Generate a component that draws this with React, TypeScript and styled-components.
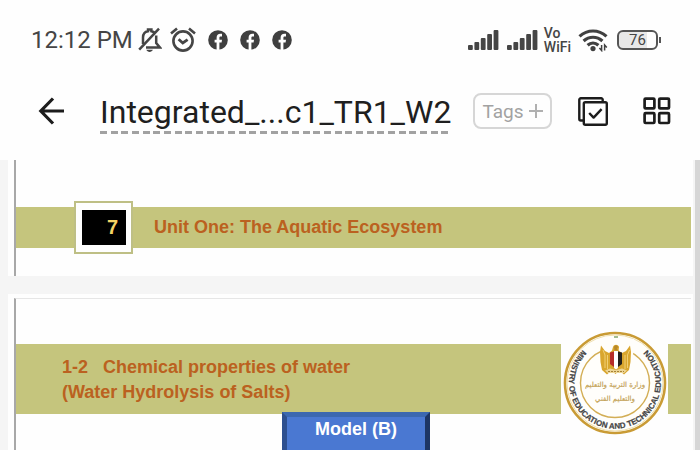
import { createGlobalStyle, styled } from 'styled-components';

const SIGNAL_BARS = [5, 8, 12, 16, 20];

const SignalIcon = () => (
  <svg width="32" height="22" viewBox="0 0 32 22" fill="#454545">
    {SIGNAL_BARS.map((height, index) => (
      <rect
        key={height}
        x={index * 6.4}
        y={21 - height}
        width="4.8"
        height={height}
        rx="1"
      />
    ))}
  </svg>
);

const BellOffIcon = () => (
  <svg
    width="24"
    height="26"
    viewBox="0 0 24 26"
    fill="none"
    stroke="#454545"
    strokeWidth="2.5"
  >
    <path d="M1.2 22.6 21 1.6" />
    <path d="M5 17v-6.4C5 6.8 7.4 4.6 10 4.2V2.4h3.4v1.8c1.2.2 2.2.7 3 1.3" />
    <path d="M18.2 8.6V16l3.8 4.6H8" />
    <path d="M8.4 22.8h6.4c-.8 2.8-5.6 2.8-6.4 0z" fill="#454545" stroke="none" />
  </svg>
);

const AlarmIcon = () => (
  <svg
    width="26"
    height="26"
    viewBox="0 0 26 26"
    fill="none"
    stroke="#454545"
    strokeWidth="2.6"
  >
    <circle cx="13" cy="14" r="9.6" />
    <path d="M1 6.4 7 1.4M25 6.4 19 1.4" />
    <path d="M8.6 12.2l4.2 3.8 4.8-3.4" strokeWidth="2.8" />
  </svg>
);

const FacebookIcon = () => (
  <svg width="20" height="20" viewBox="0 0 20 20">
    <circle cx="10" cy="10" r="9.8" fill="#3f3f3f" />
    <path
      d="M8.6 20v-7.4H6.6V9.8h2V8c0-2.8 1.5-4.2 3.8-4.2h1.6v2.6h-1.2c-1 0-1.4.5-1.4 1.4v2h2.6l-.4 2.8h-2.2V20z"
      fill="#fff"
    />
  </svg>
);

const WifiIcon = () => (
  <svg
    width="30"
    height="24"
    viewBox="0 0 30 24"
    fill="none"
    stroke="#404040"
    strokeWidth="3.2"
  >
    <path d="M1.5 8.4c8-7.2 19-7.2 27 0" />
    <path d="M5.6 13c5.6-5 13.2-5 18.8 0" />
    <path d="M9.6 17.2c3.2-2.9 7.6-2.9 10.8 0" />
    <circle cx="15" cy="20.6" r="2.6" fill="#404040" stroke="none" />
    <path d="M23.6 17v5.5l-2.2-2.4M26.6 22.5V17l2.2 2.4" strokeWidth="1.5" />
  </svg>
);

const BackIcon = () => (
  <svg
    width="28"
    height="30"
    viewBox="0 0 28 30"
    fill="none"
    stroke="#1c1c1c"
    strokeWidth="3.2"
  >
    <path d="M15 2.5 2.8 15 15 27.5M3 15h23" />
  </svg>
);

const PlusIcon = () => (
  <svg width="14" height="14" viewBox="0 0 14 14" stroke="#b0b0b0" strokeWidth="2">
    <path d="M0 7h14M7 0v14" />
  </svg>
);

const SelectPagesIcon = () => (
  <svg
    width="30"
    height="29"
    viewBox="0 0 30 29"
    fill="none"
    stroke="#1c1c1c"
    strokeWidth="2.4"
    strokeLinejoin="round"
  >
    <path d="M5 23.5H2.8a1.5 1.5 0 0 1-1.5-1.5V2.8a1.5 1.5 0 0 1 1.5-1.5h20.4a1.5 1.5 0 0 1 1.5 1.5V5" />
    <rect x="5.8" y="5.3" width="23" height="22.4" rx="1.5" />
    <path d="M11.2 16l4.4 4.6 8-8.4" />
  </svg>
);

const GridIcon = () => (
  <svg
    width="28"
    height="28"
    viewBox="0 0 28 28"
    fill="none"
    stroke="#1c1c1c"
    strokeWidth="2.7"
  >
    <rect x="1.6" y="1.6" width="9.8" height="9.8" rx="1" />
    <rect x="16.2" y="1.6" width="9.8" height="9.8" rx="1" />
    <rect x="1.6" y="16.2" width="9.8" height="9.8" rx="1" />
    <rect x="16.2" y="16.2" width="9.8" height="9.8" rx="1" />
  </svg>
);

const MinistrySeal = () => (
  <SealDrawing viewBox="0 0 104 104" role="img" aria-label="Ministry seal">
    <circle cx="52" cy="52" r="50" fill="#fffefb" stroke="#c99b35" strokeWidth="2.6" />
    <circle cx="52" cy="52" r="48" fill="none" stroke="#efdfae" strokeWidth="1" />
    <circle cx="52" cy="52" r="34.5" fill="none" stroke="#d3ae55" strokeWidth="1.4" />
    <path d="M37 8h34l-2 34H39z" fill="#fffefb" />
    <defs>
      <path id="ring" d="M20 18.7A46 46 0 1 0 84 18.7" />
    </defs>
    <RingText>
      <textPath href="#ring" startOffset="50%" textAnchor="middle">
        MINISTRY OF EDUCATION AND TECHNICAL EDUCATION
      </textPath>
    </RingText>
    <g transform="translate(1 5)">
      <path
        d="M49 11c1-3 5-3 6 0l-.4 3.5 3.4 2.5 4-2 4-5.5 1 6.5-.5 10-1.5 8-5 4.5-4.5-4-4 3.5-4-3.5-4.5 4-5-4.5-1.5-8-.5-10 1-6.5 4 5.500 4 2 3-2.500z"
        fill="#d9a62e"
      />
      <path d="M39 14l2 5v13M65.5 14l-2 5v13M43.5 19v14M61 19v14" stroke="#f0cf74" fill="none" />
      <path d="M46 16.5l4-1V31l-4-3z" fill="#b62c28" />
      <path d="M50 15h4v17l-2 1.5-2-1.5z" fill="#fff" />
      <path d="M54 15.5l4 1V28l-4 3z" fill="#25211d" />
      <path d="M50 10.5l2-1.5 2.5 2-1.5 1 .5 2.5h-3z" fill="#b8892a" />
      <path d="M41 34.5l5-2 6 1.5 6-1.5 5 2-3 2.5H44z" fill="#ecd596" />
      <path d="M44 35.5h16" stroke="#a78234" strokeWidth="1" strokeDasharray="2 1" />
      <path d="M50 1h4" stroke="#83a66b" strokeWidth="1.5" />
    </g>
    <SealScript x="52" y="56">وزارة التربية والتعليم</SealScript>
    <SealScript x="52" y="70">والتعليم الفني</SealScript>
  </SealDrawing>
);

const App = () => {
  return (
    <Screen>
      <GlobalStyle />
      <StatusBar>
        <StatusGroup>
          <Clock>12:12 PM</Clock>
          <BellOffIcon />
          <Notifications>
            <AlarmIcon />
            <FacebookIcon />
            <FacebookIcon />
            <FacebookIcon />
          </Notifications>
        </StatusGroup>
        <StatusGroup>
          <SignalIcon />
          <SecondSignal>
            <SignalIcon />
          </SecondSignal>
          <Carrier>
            <span>Vo</span>
            <span>WiFi</span>
          </Carrier>
          <WifiIcon />
          <Battery>76</Battery>
        </StatusGroup>
      </StatusBar>

      <Toolbar>
        <IconButton aria-label="Back">
          <BackIcon />
        </IconButton>
        <FileName>Integrated_...c1_TR1_W2</FileName>
        <TagsButton>
          Tags
          <PlusIcon />
        </TagsButton>
        <Actions>
          <IconButton aria-label="Select pages">
            <SelectPagesIcon />
          </IconButton>
          <IconButton aria-label="Grid view">
            <GridIcon />
          </IconButton>
        </Actions>
      </Toolbar>

      <Viewer>
        <Pages>
          <Sheet>
            <UnitPage>
              <UnitBand>
                <PageBadge>
                  <PageNumber>7</PageNumber>
                </PageBadge>
                <Heading>Unit One: The Aquatic Ecosystem</Heading>
              </UnitBand>
            </UnitPage>
          </Sheet>
          <LastSheet>
            <LessonPage>
              <LessonHeader>
                <LessonBand>
                  <Heading>
                    1-2 &nbsp; Chemical properties of water
                    <br />
                    (Water Hydrolysis of Salts)
                  </Heading>
                </LessonBand>
                <MinistrySeal />
                <BandEnd />
              </LessonHeader>
              <ModelBox>Model (B)</ModelBox>
            </LessonPage>
          </LastSheet>
        </Pages>
        <ScrollTrack />
      </Viewer>
    </Screen>
  );
};

export default App;

const GlobalStyle = createGlobalStyle`
  * {
    box-sizing: border-box;
  }

  body {
    margin: 0;
    background: #fefefe;
    font-family: Roboto, 'Liberation Sans', sans-serif;
  }

  h1, h2 {
    margin: 0;
  }

  svg {
    display: block;
    flex-shrink: 0;
  }
`;

const Screen = styled.div`
  display: flex;
  flex-direction: column;
  height: 100vh;
  overflow: hidden;
`;

const StatusBar = styled.div`
  display: flex;
  justify-content: space-between;
  align-items: center;
  height: 80px;
  padding: 0 42px 0 31px;
  flex-shrink: 0;
`;

const StatusGroup = styled.div`
  display: flex;
  align-items: center;
`;

const Clock = styled.span`
  margin-right: 5px;
  color: #454545;
  font-size: 24px;
  line-height: 28px;
`;

const Notifications = styled.div`
  display: flex;
  align-items: center;
  gap: 12px;
  margin-left: 8px;
`;

const SecondSignal = styled.div`
  margin: 0 5px 0 7px;
`;

const Carrier = styled.div`
  display: flex;
  flex-direction: column;
  margin-right: 7px;
  color: #454545;
  font-size: 14px;
  font-weight: 500;
  line-height: 14px;
`;

const Battery = styled.div`
  position: relative;
  width: 41px;
  height: 20px;
  margin-left: 9px;
  border: 2px solid #555555;
  border-radius: 6px;
  background: linear-gradient(to right, #e8e8e8 76%, #fefefe 76%);
  color: #454545;
  font-size: 15px;
  line-height: 17px;
  text-align: center;

  &::after {
    content: '';
    position: absolute;
    top: 5px;
    right: -5px;
    width: 2px;
    height: 6px;
    background: #555555;
  }
`;

const Toolbar = styled.header`
  display: flex;
  align-items: center;
  height: 80px;
  padding: 0 29px 18px 38px;
  flex-shrink: 0;
`;

const IconButton = styled.button`
  padding: 0;
  border: 0;
  background: none;
`;

const FileName = styled.h1`
  margin: 4px 0 0 34px;
  padding-bottom: 2px;
  background: linear-gradient(
      to right,
      #a2a2a2 7px,
      transparent 7px 11px,
      #a2a2a2 11px 18px,
      transparent 18px 21px,
      #a2a2a2 21px 28px,
      transparent 28px
    )
    0 100% / 32px 3px repeat-x;
  color: #1f1f1f;
  font-size: 32px;
  font-weight: 400;
  line-height: 40px;
  white-space: nowrap;
`;

const TagsButton = styled.button`
  display: flex;
  align-items: center;
  gap: 5px;
  height: 36px;
  margin-left: 22px;
  padding: 0 7px;
  border: 2px solid #d6d6d6;
  border-radius: 8px;
  background: #fefefe;
  color: #a2a2a2;
  font-family: inherit;
  font-size: 19px;
`;

const Actions = styled.div`
  display: flex;
  align-items: center;
  gap: 35px;
  margin-left: auto;
`;

const Viewer = styled.main`
  display: flex;
  flex: 1;
  min-height: 0;
`;

const Pages = styled.div`
  display: flex;
  flex-direction: column;
  flex: 1;
  gap: 18px;
  padding: 0 2px 0 8px;
  background: #f5f5f5;
`;

const ScrollTrack = styled.div`
  width: 5px;
  background: #d6d6d6;
`;

const Sheet = styled.div`
  padding: 0 2px 0 6px;
  background: #fefefe;
`;

const LastSheet = styled(Sheet)`
  flex: 1;
  padding-top: 4px;
`;

const Page = styled.section`
  border-left: 2px solid #a8a8a8;
  font-family: 'Liberation Sans', Arial, sans-serif;
`;

const UnitPage = styled(Page)`
  padding: 41px 0 22px;
`;

const LessonPage = styled(Page)`
  height: 100%;
  padding-top: 32px;
  border-top: 1px solid #e6e6e6;
`;

const UnitBand = styled.div`
  display: flex;
  align-items: center;
  background: linear-gradient(#c5c57d, #c5c57d) 0 6px / 100% 41px no-repeat;
`;

const PageBadge = styled.div`
  width: 59px;
  height: 53px;
  margin: 0 21px 0 58px;
  padding: 7px 5px 7px 6px;
  border: 2px solid #bebf85;
  background: #fefefe;
`;

const PageNumber = styled.div`
  height: 35px;
  padding-right: 8px;
  background: #000000;
  color: #f6d365;
  font-size: 20px;
  font-weight: 700;
  line-height: 34px;
  text-align: right;
`;

const Heading = styled.h2`
  color: #bb6120;
  font-size: 18px;
  font-weight: 700;
  line-height: 25px;
`;

const LessonHeader = styled.div`
  display: flex;
  align-items: flex-start;
  margin-bottom: -23px;
`;

const LessonBand = styled.div`
  flex: 1;
  height: 70px;
  margin-top: 13px;
  padding: 11px 0 0 46px;
  background: #c5c57d;
`;

const BandEnd = styled.div`
  width: 23px;
  height: 70px;
  margin-top: 13px;
  background: #c5c57d;
`;

const SealDrawing = styled.svg`
  width: 104px;
  height: 104px;
  margin: 0 1px 0 2px;
`;

const RingText = styled.text`
  fill: #444444;
  stroke: #444444;
  stroke-width: 0.2;
  font-family: 'Liberation Sans Narrow', 'Liberation Sans', sans-serif;
  font-size: 8px;
  font-weight: 700;
`;

const SealScript = styled.text`
  fill: #c4a256;
  stroke: #c4a256;
  stroke-width: 0.2;
  font-family: 'DejaVu Sans', sans-serif;
  font-size: 7px;
  text-anchor: middle;
`;

const ModelBox = styled.div`
  position: relative;
  width: 148px;
  height: 60px;
  margin-left: 266px;
  border: 5px solid;
  border-color: #3c68b0 #1d3564 #1d3564 #2d4f8f;
  background: #4a78d2;
  color: #ffffff;
  font-size: 18px;
  font-weight: 700;
  line-height: 25px;
  text-align: center;
`;
